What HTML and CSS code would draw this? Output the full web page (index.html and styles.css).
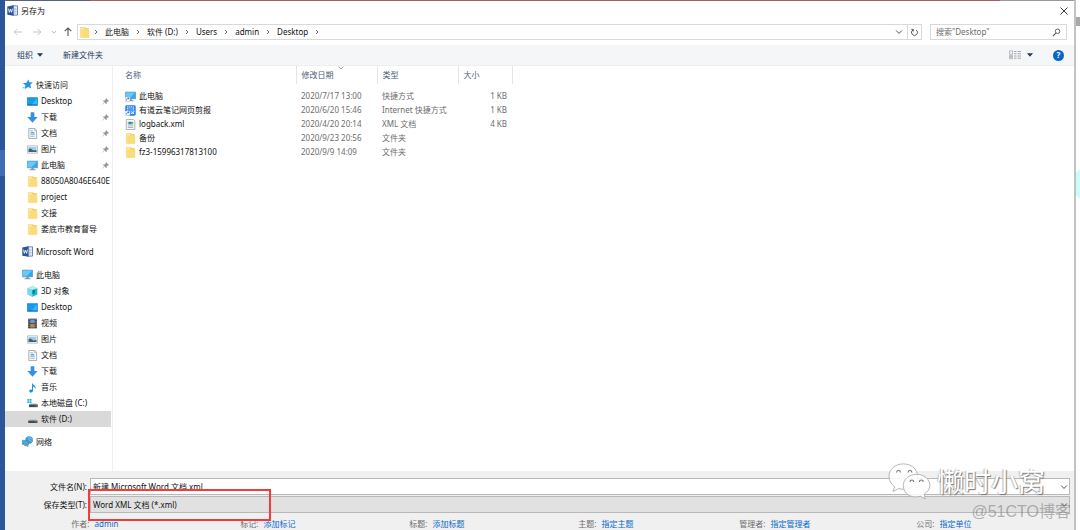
FILE: index.html
```
<!DOCTYPE html>
<html lang="zh-CN">
<head>
<meta charset="utf-8">
<title>另存为</title>
<link rel="stylesheet" href="styles.css">
</head>
<body>
<svg class="defs" aria-hidden="true">
  <symbol id="word" viewBox="0 0 12 12"><path d="M6 1h5.5v10H6z" fill="#fff" stroke="#2b579a" stroke-width=".8"/><path d="M7.5 3.5h3M7.5 5.2h3M7.5 7h3M7.5 8.8h3" stroke="#7d9ccb" stroke-width=".8"/><path d="M.3 1.5 7.3.2v11.6L.3 10.5z" fill="#2b579a"/><path d="m1.7 4 .9 4L3.8 4.5 5 8l1-4" fill="none" stroke="#fff" stroke-width=".9"/></symbol>
  <symbol id="folder" viewBox="0 0 12 12"><path d="M1 .3h5.5l1 .7h3v10.5H1z" fill="#f3d16c"/><path d="M1.5.8h4v10.5h-4z" fill="#ffe9a0"/><path d="M2.5 2.5h8.7v9.2H2.5z" fill="#fbdc7c"/></symbol>
  <symbol id="star" viewBox="0 0 12 12"><path d="m6.8.6 1.3 3 3.7.3-2.7 2.5.8 3.8-3.3-1.6-3.8 2.5 1-4.3L.8 4.7l4.1-.7z" fill="#2196e8"/><path d="m0 10 3-1" stroke="#7fc4f1"/></symbol>
  <symbol id="desk" viewBox="0 0 12 12"><path d="M.4 1.8h11.2v8.4H.4z" fill="#159cf0" stroke="#087acb" stroke-width=".7"/><path d="M5 9.8 11.2 2v7.8z" fill="#3db4fb"/><path d="M1 9.6h10" stroke="#075a9c" stroke-width=".7"/></symbol>
  <symbol id="down" viewBox="0 0 12 12"><path d="M4 .4h4v5.1h3.6L6 11.6.4 5.5H4z" fill="#3890df"/></symbol>
  <symbol id="doc" viewBox="0 0 12 12"><path d="M2 .5h6.5l2 2v9H2z" fill="#f8fafb" stroke="#8b949c" stroke-width=".8"/><path d="M8.2.8v2h2" fill="none" stroke="#8b949c" stroke-width=".6"/><path d="M3.5 3h3M3.5 7h5M3.5 9h5" stroke="#70a6d0" stroke-width=".8"/><path d="M4 4.3h4V6H4z" fill="#65a8d6"/></symbol>
  <symbol id="pic" viewBox="0 0 12 12"><path d="M.5 2h11v8H.5z" fill="#f6f8fa" stroke="#98a2aa" stroke-width=".7"/><path d="M1.7 3.3h8.6v5.4H1.7z" fill="#9dcdee"/><path d="M1.7 5.5 4 5l3 2 3.3-.5v2.2H1.7z" fill="#38666f"/></symbol>
  <symbol id="pc" viewBox="0 0 12 12"><path d="M.4 1.2h11.2v7.3H.4z" fill="#30a8ef" stroke="#5d91b4" stroke-width=".7"/><path d="M.8 1.6h10.4L5 8H.8z" fill="#69c7fa"/><path d="M4.7 8.8h2.6v1.4h2v.9H2.7v-.9h2z" fill="#8496a3"/></symbol>
  <symbol id="cube" viewBox="0 0 12 12"><path d="m6 .4 5.3 2v7L6 11.7.7 9.4v-7z" fill="#24b6ce"/><path d="m.7 2.4 5.3 2v7.3L.7 9.4z" fill="#71dce7"/><path d="m6 .4 5.3 2-5.3 2-5.3-2z" fill="#b4f0f4"/><path d="M6 4.4 8.6 4v4L6 9z" fill="#08779d"/></symbol>
  <symbol id="film" viewBox="0 0 12 12"><path d="M1.2.7h9.6v10.6H1.2z" fill="#343a43"/><path d="M3.5 1.5h5v4h-5z" fill="#699bd1"/><path d="M3.5 6.3h5v4.2h-5z" fill="#b88757"/><path d="M2.2 1v10M9.8 1v10" stroke="#e6e6e6" stroke-width=".8" stroke-dasharray="1 1"/></symbol>
  <symbol id="music" viewBox="0 0 12 12"><path d="M5.5.5c.2 2.5 4.8 3 3.7 7C8.7 5.7 7.8 5 6.6 4.8v4.7c-.4 2.6-4 2.7-4.2.7-.1-1.6 1.8-2.4 3.1-1.6z" fill="#1692e7"/></symbol>
  <symbol id="cdrive" viewBox="0 0 12 12"><path d="M.4 1h2v2h-2zm2.5 0h2v2h-2zM.4 3.5h2v2h-2zm2.5 0h2v2h-2z" fill="#20aef1"/><path d="m2.5 7 1-1h6.8l1.2 1z" fill="#b5babe"/><path d="M2.2 7h9.5v3H2.2z" fill="#414b51"/><path d="M9.5 8.6h1" stroke="#66e05c"/></symbol>
  <symbol id="drive" viewBox="0 0 12 12"><path d="m1.6 7.2 1-1.2h7.6l1 1.2z" fill="#b5babe"/><path d="M1.4 7.2h10v2.6h-10z" fill="#414b51"/><path d="M9.2 8.6h1" stroke="#66e05c"/></symbol>
  <symbol id="net" viewBox="0 0 12 12"><circle cx="7.8" cy="4.4" r="4.1" fill="#3998d7"/><path d="M5.8 1.6 8 2.5l-.6 2L11 6M8.6.8l.6 2 2 .6" fill="none" stroke="#91d0f2" stroke-width=".8"/><path d="m.2 4.5 6.8.9v4.8l-6.8-1.2z" fill="#3aafea" stroke="#617c8c" stroke-width=".7"/><path d="m2.5 10 4.2 1.3" stroke="#687982"/></symbol>
  <symbol id="pin" viewBox="0 0 8 8"><path d="m4.7.6 2.8 2.7-.8.3-1.6 1.5-.2 1.6-3.5-3.5 1.6-.2 1.5-1.6zM2.8 5 .6 7.4" fill="#8e989f" stroke="#8e989f" stroke-width=".6"/></symbol>
  <symbol id="pclink" viewBox="0 0 12 12"><use href="#pc"/><path d="M.3 6.5h5v5h-5z" fill="#fff" stroke="#a8b5bf" stroke-width=".5"/><path d="M1.4 10.5c0-2 1-2.5 2.8-2.5M3 6.9 4.4 8 3 9.2" fill="none" stroke="#1769b4" stroke-width=".8"/></symbol>
  <symbol id="clip" viewBox="0 0 12 12"><rect x=".3" y=".3" width="11.4" height="11.4" rx="1.5" fill="#267df0"/><path d="M2.5 2h7v7.2h-7z" fill="#529af6" stroke="#fff" stroke-width=".9" stroke-dasharray="1.2 .8"/><path d="m7 7 3 3M10 7l-3 3" stroke="#fff" stroke-width=".8"/><path d="M.3 6.7h4.8v4.8H.3z" fill="#fff"/><path d="M1.4 10.5c0-2 1-2.5 2.8-2.5M3 6.9 4.4 8 3 9.2" fill="none" stroke="#1769b4" stroke-width=".8"/></symbol>
  <symbol id="xml" viewBox="0 0 12 12"><path d="M1.4.5h7.8l1.6 1.6v9.4H1.4z" fill="#fafafa" stroke="#999" stroke-width=".8"/><path d="M3 3h6v3H3z" fill="#59b9b0"/><path d="M4.8 3.2h2v2h-2z" fill="#3769a8"/><path d="M3 7.5h6M3 9.3h6" stroke="#888" stroke-width=".7"/></symbol>
  <symbol id="chev" viewBox="0 0 8 8"><path d="m1.2 2.5 2.8 3 2.8-3" fill="none" stroke="currentColor"/></symbol>
  <symbol id="sep" viewBox="0 0 8 8"><path d="m3 2 2 2-2 2" fill="none" stroke="#555" stroke-width=".9"/></symbol>
  <symbol id="tri" viewBox="0 0 8 8"><path d="M1 2.3h6L4 5.8z" fill="currentColor"/></symbol>
</svg>

<div class="screen">
  <div class="backdrop-left"></div>
  <main class="dialog">
    <header class="title"><svg class="icon"><use href="#word"/></svg><h1>另存为</h1>
      <button class="close" aria-label="关闭"><svg viewBox="0 0 10 10"><path d="m1.5 1.5 7 7m0-7-7 7" stroke="#222" stroke-width=".9"/></svg></button>
    </header>
    <div class="address-row">
      <div class="history">
        <button aria-label="后退"><svg viewBox="0 0 10 10"><path d="M9 5H1.2m3-3-3 3 3 3" fill="none" stroke="#c5c5c5"/></svg></button>
        <button aria-label="前进"><svg viewBox="0 0 10 10"><path d="M1 5h7.8m-3-3 3 3-3 3" fill="none" stroke="#c5c5c5"/></svg></button>
        <button class="recent" aria-label="最近位置"><svg><use href="#chev"/></svg></button>
        <button aria-label="向上"><svg viewBox="0 0 10 10"><path d="M5 9V1.2m-3.3 3L5 1l3.3 3.2" fill="none" stroke="#555" stroke-width="1.1"/></svg></button>
      </div>
      <div class="address">
        <svg class="icon"><use href="#folder"/></svg>
        <nav class="crumbs" aria-label="路径">
          <svg><use href="#sep"/></svg><a href="#">此电脑</a>
          <svg><use href="#sep"/></svg><a href="#">软件 (D:)</a>
          <svg><use href="#sep"/></svg><a href="#">Users</a>
          <svg><use href="#sep"/></svg><a href="#">admin</a>
          <svg><use href="#sep"/></svg><a href="#">Desktop</a>
          <svg><use href="#sep"/></svg>
        </nav>
        <button class="expand" aria-label="展开"><svg><use href="#chev"/></svg></button>
        <button class="refresh" aria-label="刷新"><svg viewBox="0 0 10 10"><path d="M3.2 2.2A3.3 3.3 0 1 0 7 2.3M1.5 1.5h2.2v2.3" fill="none" stroke="#555" stroke-width="1.1"/></svg></button>
      </div>
      <label class="search"><input type="text" aria-label="搜索" placeholder='搜索"Desktop"'><svg viewBox="0 0 10 10"><circle cx="6.2" cy="3.6" r="2.5" fill="none" stroke="#555"/><path d="M4.5 5.5 1 9" stroke="#555" stroke-width="1.2"/></svg></label>
    </div>
    <div class="toolbar">
      <button>组织<svg><use href="#tri"/></svg></button>
      <button>新建文件夹</button>
      <button class="view" aria-label="视图"><svg class="list" viewBox="0 0 12 10"><path d="M.5.8h3v3.4h-3zm0 4.6h3v3.4h-3z" fill="#f3f6fa" stroke="#9aa5b3" stroke-width=".7"/><path d="M1 6h2v2H1z" fill="#e4b29b"/><path d="M5 1.5h2.5M8.5 1.5H12M5 3.7h2.5M8.5 3.7H12M5 6h2.5M8.5 6H12M5 8.2h2.5M8.5 8.2H12" stroke="#8994a2" stroke-width=".8"/></svg><svg><use href="#tri"/></svg></button>
      <button class="help" aria-label="帮助">?</button>
    </div>
    <div class="content">
      <nav class="tree" aria-label="文件夹">
        <ul>
          <li><a href="#" class="root"><svg class="icon"><use href="#star"/></svg><span>快速访问</span></a></li>
          <li><a href="#"><svg class="icon"><use href="#desk"/></svg><span>Desktop</span><svg class="pin"><use href="#pin"/></svg></a></li>
          <li><a href="#"><svg class="icon"><use href="#down"/></svg><span>下载</span><svg class="pin"><use href="#pin"/></svg></a></li>
          <li><a href="#"><svg class="icon"><use href="#doc"/></svg><span>文档</span><svg class="pin"><use href="#pin"/></svg></a></li>
          <li><a href="#"><svg class="icon"><use href="#pic"/></svg><span>图片</span><svg class="pin"><use href="#pin"/></svg></a></li>
          <li><a href="#"><svg class="icon"><use href="#pc"/></svg><span>此电脑</span><svg class="pin"><use href="#pin"/></svg></a></li>
          <li><a href="#"><svg class="icon"><use href="#folder"/></svg><span>88050A8046E640E</span></a></li>
          <li><a href="#"><svg class="icon"><use href="#folder"/></svg><span>project</span></a></li>
          <li><a href="#"><svg class="icon"><use href="#folder"/></svg><span>交接</span></a></li>
          <li><a href="#"><svg class="icon"><use href="#folder"/></svg><span>娄底市教育督导</span></a></li>
        </ul>
        <ul><li><a href="#" class="root"><svg class="icon"><use href="#word"/></svg><span>Microsoft Word</span></a></li></ul>
        <ul>
          <li><a href="#" class="root"><svg class="icon"><use href="#pc"/></svg><span>此电脑</span></a></li>
          <li><a href="#"><svg class="icon"><use href="#cube"/></svg><span>3D 对象</span></a></li>
          <li><a href="#"><svg class="icon"><use href="#desk"/></svg><span>Desktop</span></a></li>
          <li><a href="#"><svg class="icon"><use href="#film"/></svg><span>视频</span></a></li>
          <li><a href="#"><svg class="icon"><use href="#pic"/></svg><span>图片</span></a></li>
          <li><a href="#"><svg class="icon"><use href="#doc"/></svg><span>文档</span></a></li>
          <li><a href="#"><svg class="icon"><use href="#down"/></svg><span>下载</span></a></li>
          <li><a href="#"><svg class="icon"><use href="#music"/></svg><span>音乐</span></a></li>
          <li><a href="#"><svg class="icon"><use href="#cdrive"/></svg><span>本地磁盘 (C:)</span></a></li>
          <li><a href="#" class="selected"><svg class="icon"><use href="#drive"/></svg><span>软件 (D:)</span></a></li>
        </ul>
        <ul><li><a href="#" class="root"><svg class="icon"><use href="#net"/></svg><span>网络</span></a></li></ul>
      </nav>
      <section class="files">
        <table>
          <colgroup><col class="c-name"><col class="c-mid"><col class="c-mid"><col class="c-size"></colgroup>
          <thead><tr><th>名称</th><th>修改日期<svg class="sort" viewBox="0 0 8 8"><path d="m1.5 2.5 2.5 2.5 2.5-2.5" fill="none" stroke="#888" stroke-width=".8"/></svg></th><th>类型</th><th>大小</th></tr></thead>
          <tbody>
            <tr><td><span class="file"><svg class="icon"><use href="#pclink"/></svg>此电脑</span></td><td>2020/7/17 13:00</td><td>快捷方式</td><td>1 KB</td></tr>
            <tr><td><span class="file"><svg class="icon"><use href="#clip"/></svg>有道云笔记网页剪报</span></td><td>2020/6/20 15:46</td><td>Internet 快捷方式</td><td>1 KB</td></tr>
            <tr><td><span class="file"><svg class="icon"><use href="#xml"/></svg>logback.xml</span></td><td>2020/4/20 20:14</td><td>XML 文档</td><td>4 KB</td></tr>
            <tr><td><span class="file"><svg class="icon"><use href="#folder"/></svg>备份</span></td><td>2020/9/23 20:56</td><td>文件夹</td><td></td></tr>
            <tr><td><span class="file"><svg class="icon"><use href="#folder"/></svg>fz3-15996317813100</span></td><td>2020/9/9 14:09</td><td>文件夹</td><td></td></tr>
          </tbody>
        </table>
      </section>
    </div>
    <footer class="save">
      <div class="field"><label for="name">文件名(N):</label><div class="control"><input id="name" type="text" value="新建 Microsoft Word 文档.xml"><svg class="arrow"><use href="#chev"/></svg></div></div>
      <div class="field"><label for="type">保存类型(T):</label><div class="control"><select id="type"><option>Word XML 文档 (*.xml)</option></select><svg class="arrow"><use href="#chev"/></svg><div class="highlight"></div></div></div>
      <dl class="meta">
        <div><dt>作者:</dt><dd><a href="#">admin</a></dd></div>
        <div><dt>标记:</dt><dd><a href="#">添加标记</a></dd></div>
        <div><dt>标题:</dt><dd><a href="#">添加标题</a></dd></div>
        <div><dt>主题:</dt><dd><a href="#">指定主题</a></dd></div>
        <div><dt>管理者:</dt><dd><a href="#">指定管理者</a></dd></div>
        <div><dt>公司:</dt><dd><a href="#">指定单位</a></dd></div>
      </dl>
    </footer>
  </main>
  <div class="backdrop-right"></div>
  <div class="brand"><svg viewBox="0 0 46 40"><g fill="#fff" fill-opacity=".85" stroke="#aaa" stroke-width=".9"><path d="M17 2C8 2 2 8 2 15c0 5 2 8 6 11l-2 5 6-3c12 3 20-4 20-13C32 8 26 2 17 2z"/><path d="M31 13c-8 0-14 5-14 12 0 8 8 14 18 11l5 3-1-5c4-3 6-6 6-9 0-7-6-12-14-12z"/></g><g fill="none" stroke="#777" stroke-width="1.2"><path d="M10 11a2 2 0 0 1 4 0M22 11a2 2 0 0 1 4 0M24 21a2 2 0 0 1 4 0M34 21a2 2 0 0 1 4 0"/></g></svg><span>懒时小窝</span></div>
  <div class="credit">@51CTO博客</div>
</div>
</body>
</html>
```
FILE: styles.css
```
* { box-sizing: border-box; }
body {
  margin: 0;
  font: 8px/12px "Noto Sans", "Noto Sans CJK SC", sans-serif;
  color: #111;
  background: #fff;
}
button, input, select { font: inherit; color: inherit; border: 0; background: none; padding: 0; margin: 0; border-radius: 0; }
a { color: inherit; text-decoration: none; }
ul, dl, dd, h1 { margin: 0; padding: 0; font: inherit; list-style: none; }
svg { display: block; flex: none; width: 8px; height: 8px; }
.defs { position: absolute; width: 0; height: 0; }
.icon { width: 11px; height: 11px; }

.screen { position: relative; display: flex; height: 100vh; min-height: 520px; overflow: hidden; }
.backdrop-left { width: 5px; background: linear-gradient(#2b579a 150px, #3e6db5 150px, #3e6db5 176px, #2b579a 176px); }
.backdrop-right {
  width: 6px;
  border-left: 2px solid #c3c3c3;
  background: radial-gradient(ellipse 7px 14px at 4px 184px, #c9fdfb 98%, transparent), linear-gradient(#fff 17px, #a9a9a9 17px, #a9a9a9 26px, #fff 26px);
}
.dialog {
  flex: 1; min-width: 0; display: flex; flex-direction: column;
  border-top: 1px solid;
  border-image: linear-gradient(90deg, #56637f 8%, #a85d63 8%, #a85d63 93%, #999 93%) 1;
}

.title { display: flex; align-items: center; height: 19px; padding: 0 5px 0 2px; gap: 3px; }
.close { margin-left: auto; }
.close svg { width: 10px; height: 10px; }
.address-row { display: flex; align-items: center; height: 24px; padding: 0 7px 0 8px; margin-bottom: 1px; }
.history { display: flex; align-items: center; width: 64px; gap: 9px; }
.history svg { width: 10px; height: 10px; }
.history .recent { margin-right: -3px; }
.history .recent svg { width: 6px; height: 6px; color: #aaa; }
.address { flex: 1; display: flex; align-items: center; height: 16px; border: 1px solid #d9d9d9; padding-left: 1px; }
.crumbs { flex: 1; display: flex; align-items: center; gap: 5px; padding-left: 2px; }
.expand { padding: 0 4px; color: #555; }
.refresh { align-self: stretch; padding: 0 2px; border-left: 1px solid #d9d9d9; }
.refresh svg { width: 9px; height: 9px; }
.search { display: flex; align-items: center; width: 137px; height: 16px; margin-left: 8px; padding: 0 5px; border: 1px solid #d9d9d9; }
.search input { flex: 1; min-width: 0; outline: 0; }
.search input::placeholder { color: #6d6d6d; opacity: 1; }
.search svg { width: 9px; height: 9px; }
.toolbar { display: flex; align-items: center; gap: 19px; height: 21px; padding: 0 10px 0 12px; background: #f5f6f7; border-bottom: 1px solid #eceef0; color: #1e395b; }
.toolbar button { display: flex; align-items: center; gap: 3px; }
.toolbar .view { margin-left: auto; gap: 5px; }
.view .list { width: 12px; height: 10px; }
.toolbar .help { justify-content: center; width: 11px; height: 11px; border-radius: 50%; background: #0b66c3; color: #fff; font-weight: bold; }

.content { flex: 1; min-height: 0; display: flex; }
.tree { width: 108px; padding-top: 10px; border-right: 1px solid #f0f0f0; overflow: hidden; }
.tree ul { margin-bottom: 6px; }
.tree a { display: flex; align-items: center; gap: 3px; height: 16px; margin-right: 1px; padding-left: 22px; white-space: nowrap; overflow: hidden; }
.tree .root { height: 17px; padding-left: 17px; }
.tree .selected { background: #d9d9d9; }
.tree .pin { width: 7px; height: 7px; margin: 0 2px 0 auto; }
.files { flex: 1; }
table { width: 399px; table-layout: fixed; border-collapse: collapse; color: #6d6d6d; }
.c-name { width: 183px; }
.c-mid { width: 81px; }
.c-size { width: 54px; }
th, td { padding: 0 5px; font-weight: normal; text-align: left; white-space: nowrap; height: 14px; line-height: 12px; }
th { position: relative; height: 18px; border-right: 1px solid #e5e5e5; color: #4c607a; }
th:first-child, td:first-child { padding-left: 12px; }
thead::after { content: ""; display: block; height: 5px; }
td:last-child { text-align: right; }
.sort { position: absolute; top: -2px; left: 50%; }
.file { display: flex; align-items: center; gap: 3px; color: #111; }

.save { padding-top: 7px; background: #f0f0f0; }
.field { display: flex; align-items: center; margin-bottom: 1px; padding-right: 4px; }
.field label { width: 82px; margin-right: 3px; text-align: right; }
.control { position: relative; flex: 1; display: flex; height: 17px; }
.control input, .control select { width: 100%; padding: 0 2px; border: 1px solid #b8b8b8; background: #fff; appearance: none; outline: 0; }
.control select { background: #e1e1e1; }
.arrow { position: absolute; right: 2px; top: 5px; color: #555; }
.highlight { position: absolute; left: -2px; top: -7px; width: 183px; height: 32px; border: 2px solid #f23b3b; }
.meta { display: grid; grid-template-columns: repeat(6, 1fr); height: 16px; padding: 4px 55px 0 0; color: #6d6d6d; }
.meta div { display: flex; gap: 5px; white-space: nowrap; }
.meta dt { width: 50%; text-align: right; }
.meta a { color: #0a6acb; }

.brand { position: absolute; right: 35px; bottom: 30px; display: flex; align-items: center; gap: 6px; color: #fff; font: 27px/38px "Noto Sans CJK SC", sans-serif; text-shadow: 1px 1px 1px #777, -1px 0 1px #bbb; }
.brand svg { width: 44px; height: 38px; }
.credit { position: absolute; right: 9px; bottom: 7px; color: rgba(120, 120, 120, .55); font: 16px/22px "Liberation Sans", "Noto Sans CJK SC", sans-serif; }
```
